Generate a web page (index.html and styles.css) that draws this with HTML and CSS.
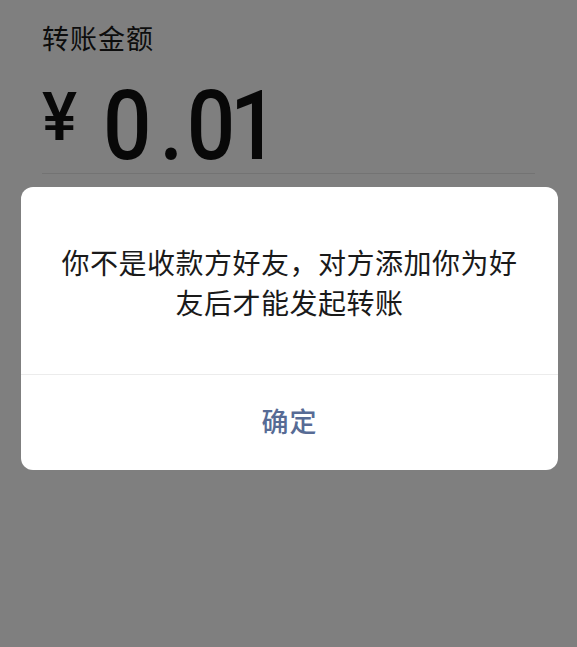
FILE: index.html
```html
<!DOCTYPE html>
<html lang="zh">
<head>
<meta charset="utf-8">
<link rel="stylesheet" href="styles.css">
</head>
<body>
<main class="page">
  <div class="label">转账金额</div>
  <div class="amount">
    <span class="yen">¥</span>
    <span class="num">0<span class="dot">.</span><span class="tight">0</span>1</span>
  </div>
  <div class="rule"></div>
</main>
<div class="mask">
  <div class="dialog">
    <div class="msg">你不是收款方好友，对方添加你为好友后才能发起转账</div>
    <div class="btn">确定</div>
  </div>
</div>
</body>
</html>
```
FILE: styles.css
```css
html, body {
  margin: 0;
  padding: 0;
  background: #ffffff;
  width: 577px;
  height: 647px;
  overflow: hidden;
  font-family: Roboto, "Noto Sans CJK SC", sans-serif;
}
.page {
  padding: 22px 42px 0 42px;
}
.label {
  font-size: 27px;
  line-height: 36px;
  color: #1a1a1a;
  letter-spacing: 1px;
}
.amount {
  display: flex;
  align-items: flex-start;
  margin-top: 26px;
  height: 84px;
}
.yen {
  font-family: Roboto, sans-serif;
  font-size: 66px;
  font-weight: 500;
  line-height: 66px;
  color: #111;
  margin-top: 1px;
}
.num {
  display: inline-block;
  font-family: Roboto, sans-serif;
  font-size: 97px;
  font-weight: 500;
  line-height: 84px;
  color: #111;
  margin-left: 26px;
  transform: scaleX(0.88);
  transform-origin: left center;
}
.dot {
  margin: 0 4px 0 9px;
}
.tight {
  margin-right: -6px;
}
.rule {
  margin-top: 5px;
  height: 1px;
  background: #e6e6e6;
}
.mask {
  position: absolute;
  left: 0;
  top: 0;
  width: 577px;
  height: 647px;
  background: rgba(0, 0, 0, 0.5);
}
.dialog {
  position: absolute;
  left: 21px;
  top: 187px;
  width: 537px;
  height: 283px;
  background: #fff;
  border-radius: 12px;
  display: flex;
  flex-direction: column;
  overflow: hidden;
}
.msg {
  flex: 0 0 188px;
  box-sizing: border-box;
  border-bottom: 1px solid #ececec;
  padding: 55px 38px 0 38px;
  font-family: "Noto Sans CJK SC", sans-serif;
  font-size: 28px;
  letter-spacing: 0.5px;
  line-height: 40px;
  color: #1a1a1a;
  text-align: center;
}
.btn {
  flex: 1;
  display: flex;
  align-items: center;
  justify-content: center;
  font-family: "Noto Sans CJK SC", sans-serif;
  font-size: 27px;
  font-weight: 500;
  color: #576b95;
  letter-spacing: 1px;
  padding-bottom: 4px;
}
```
